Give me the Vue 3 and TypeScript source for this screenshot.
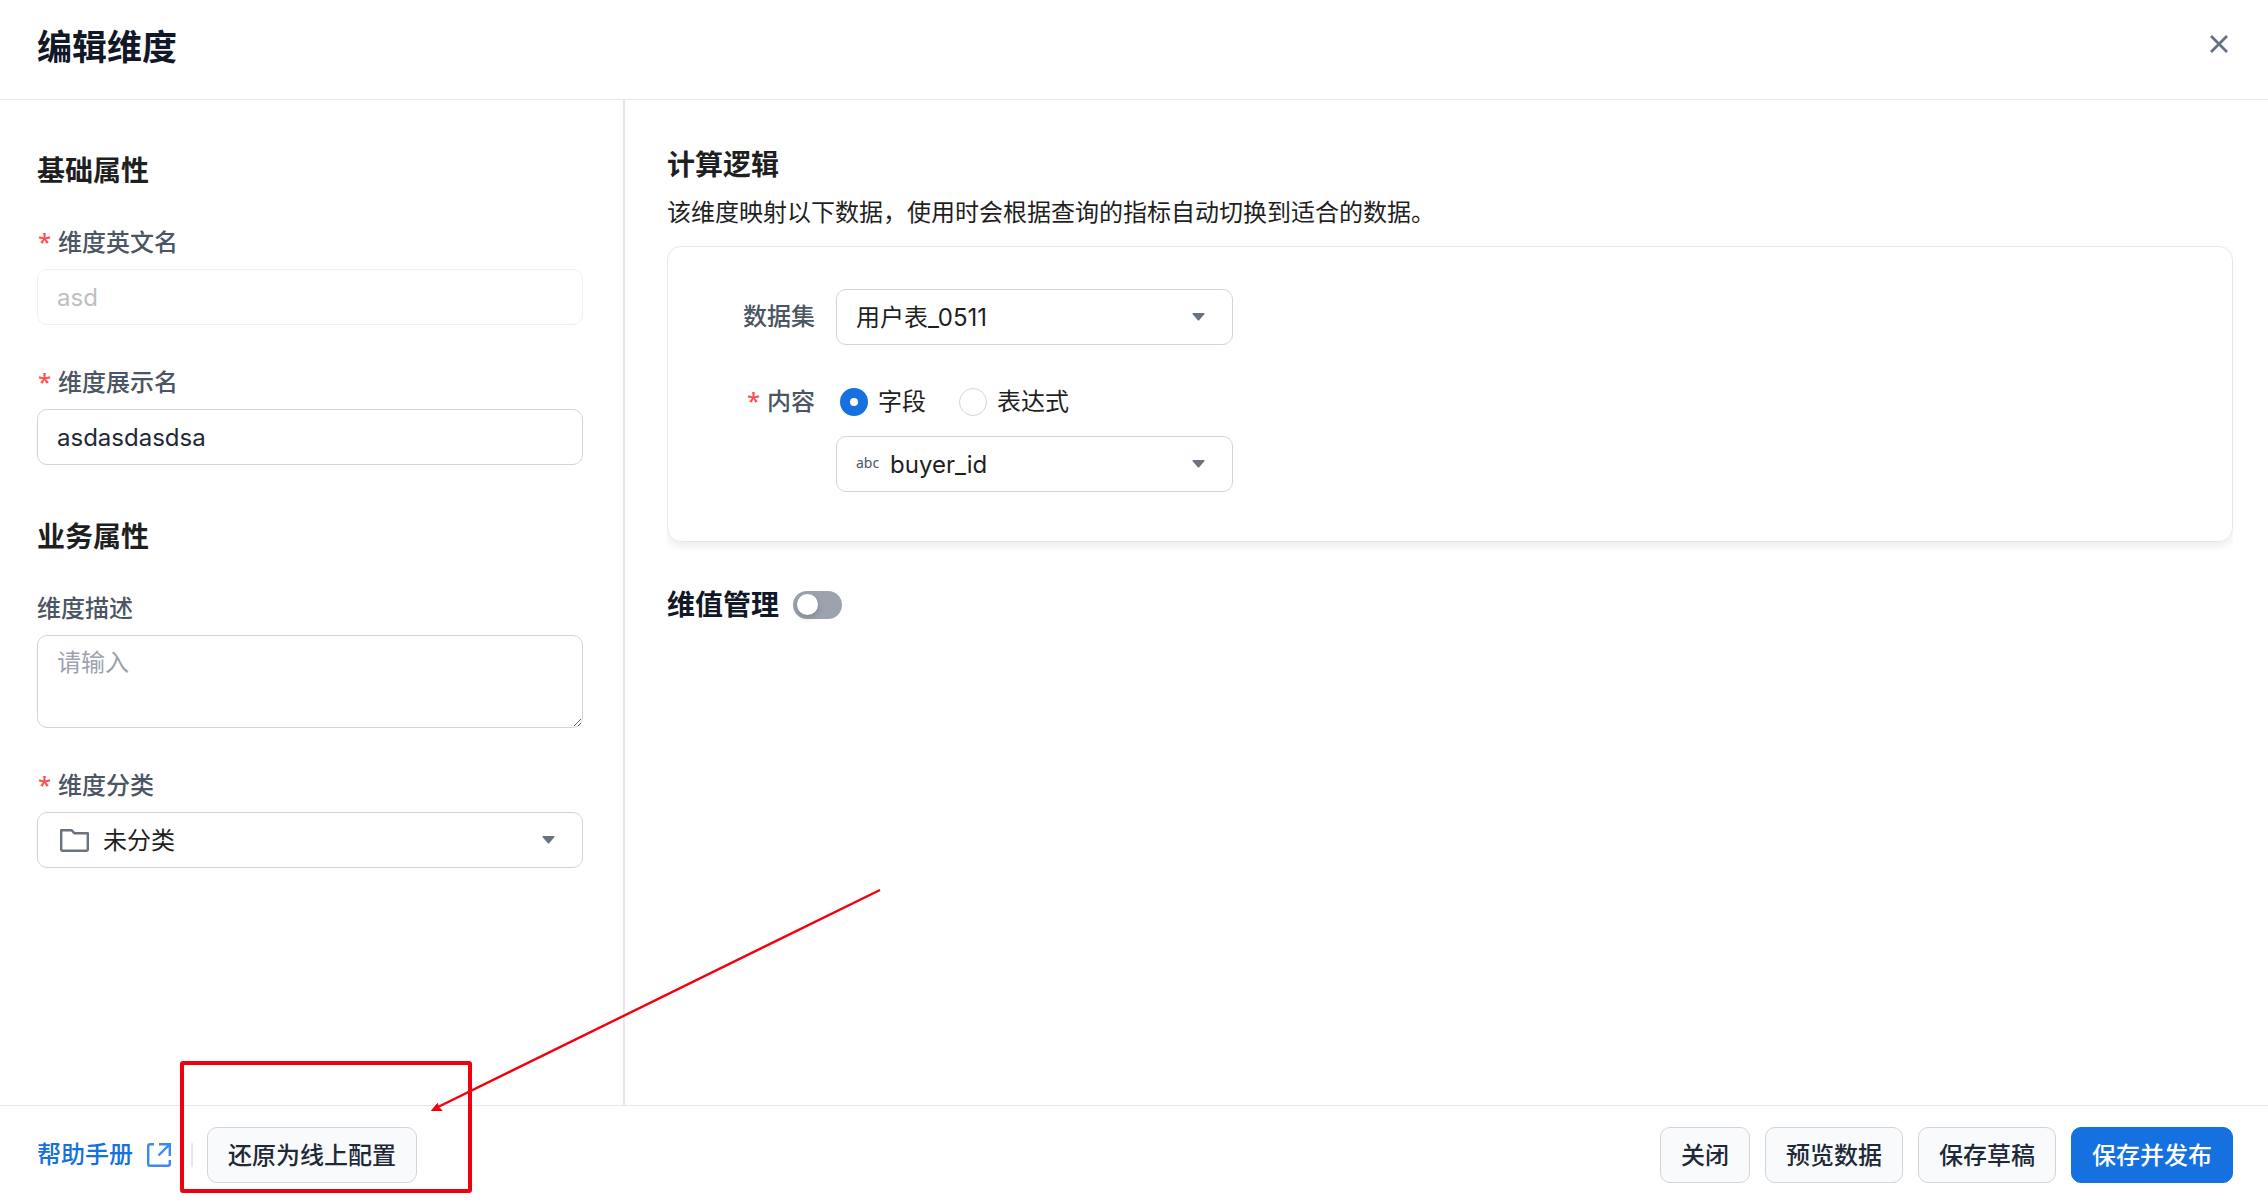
<script setup lang="ts">
import { ref } from 'vue'

const dimensionName = ref<string>('asd')
const displayName = ref<string>('asdasdasdsa')
const description = ref<string>('')
const category = ref<string>('未分类')
const dataset = ref<string>('用户表_0511')
const contentType = ref<'field' | 'expression'>('field')
const field = ref<string>('buyer_id')
const valueManaged = ref<boolean>(false)
</script>

<template>
  <div class="page">
    <header class="header">
      <h1 class="title">编辑维度</h1>
      <button class="close" type="button" aria-label="关闭">
        <svg width="18" height="18" viewBox="0 0 18 18" fill="none" stroke="currentColor" stroke-width="2.8">
          <path d="M1 1 17 17M17 1 1 17" />
        </svg>
      </button>
    </header>

    <div class="body">
      <aside class="side">
        <section class="group">
          <h2 class="heading">基础属性</h2>
          <div class="field">
            <label class="label" for="dim-name"><span class="star">*</span>维度英文名</label>
            <input id="dim-name" v-model="dimensionName" class="control" type="text" disabled />
          </div>
          <div class="field">
            <label class="label" for="dim-display"><span class="star">*</span>维度展示名</label>
            <input id="dim-display" v-model="displayName" class="control" type="text" />
          </div>
        </section>

        <section class="group">
          <h2 class="heading">业务属性</h2>
          <div class="field">
            <label class="label" for="dim-desc">维度描述</label>
            <textarea id="dim-desc" v-model="description" class="control area" placeholder="请输入"></textarea>
          </div>
          <div class="field">
            <label class="label" for="dim-category"><span class="star">*</span>维度分类</label>
            <div class="picker">
              <svg class="lead folder" width="29" height="23" viewBox="0 0 29 23" fill="none" stroke="currentColor" stroke-width="2.4" stroke-linejoin="round">
                <path d="M1.200 1.200H11.500L14.500 4.300H27.800V20.300Q27.800 21.800 26.300 21.800H2.700Q1.200 21.800 1.200 20.300Z" />
              </svg>
              <select id="dim-category" v-model="category" class="control with-folder">
                <option>未分类</option>
              </select>
              <svg class="caret" width="13" height="8" viewBox="0 0 13 8" fill="currentColor">
                <path d="M1 0H12Q13 .4 12.300 1.300L7.200 7.200Q6.500 7.900 5.800 7.200L.7 1.300Q0 .4 1 0Z" />
              </svg>
            </div>
          </div>
        </section>
      </aside>

      <main class="main">
        <h2 class="heading">计算逻辑</h2>
        <p class="hint">该维度映射以下数据，使用时会根据查询的指标自动切换到适合的数据。</p>

        <div class="card">
          <div class="row">
            <label class="label row-label tall" for="dataset">数据集</label>
            <div class="picker narrow">
              <select id="dataset" v-model="dataset" class="control">
                <option>用户表_0511</option>
              </select>
              <svg class="caret" width="13" height="8" viewBox="0 0 13 8" fill="currentColor">
                <path d="M1 0H12Q13 .4 12.300 1.300L7.200 7.200Q6.500 7.900 5.800 7.200L.7 1.300Q0 .4 1 0Z" />
              </svg>
            </div>
          </div>

          <div class="row">
            <label class="label row-label" for="content-field"><span class="star">*</span>内容</label>
            <div class="stack">
              <div class="radios" role="radiogroup" aria-label="内容">
                <label class="radio"><input v-model="contentType" type="radio" name="content" value="field" />字段</label>
                <label class="radio"><input v-model="contentType" type="radio" name="content" value="expression" />表达式</label>
              </div>
              <div class="picker narrow">
                <span class="lead type">abc</span>
                <select id="content-field" v-model="field" class="control with-type">
                  <option>buyer_id</option>
                </select>
                <svg class="caret" width="13" height="8" viewBox="0 0 13 8" fill="currentColor">
                  <path d="M1 0H12Q13 .4 12.300 1.300L7.200 7.200Q6.500 7.900 5.800 7.200L.7 1.300Q0 .4 1 0Z" />
                </svg>
              </div>
            </div>
          </div>
        </div>

        <div class="manage">
          <label class="heading dark" for="value-manage">维值管理</label>
          <input id="value-manage" v-model="valueManaged" class="switch" type="checkbox" role="switch" />
        </div>
      </main>
    </div>

    <footer class="footer">
      <a class="help" href="#help">
        帮助手册
        <svg width="24" height="24" viewBox="0 0 24 24" fill="none" stroke="#3b8af2" stroke-width="2.4">
          <path d="M7 1.200H3.200Q1.200 1.200 1.200 3.200V20.800Q1.200 22.800 3.200 22.800H20.800Q22.800 22.800 22.800 20.800V17M12 1.200H22.800V13M22.800 1.200 11.500 12.500" />
        </svg>
      </a>
      <span class="divider"></span>
      <button class="btn" type="button">还原为线上配置</button>
      <div class="actions">
        <button class="btn" type="button">关闭</button>
        <button class="btn" type="button">预览数据</button>
        <button class="btn" type="button">保存草稿</button>
        <button class="btn primary" type="button">保存并发布</button>
      </div>
    </footer>

    <svg class="annotation" width="704" height="306" viewBox="0 0 704 306" fill="none" stroke="#f3000f" aria-hidden="true">
      <rect x="2" y="176" width="288" height="128" rx="1" stroke-width="4" />
      <path d="M700 3 258 220" stroke-width="2.400" />
      <path d="M251.500 223.500 257.500 216.500 258.500 220 262 223.500Z" fill="#f3000f" stroke-width="1" />
    </svg>
  </div>
</template>

<style>
body {
  margin: 0;
  background: #fff;
}
</style>

<style scoped>
.page {
  position: relative;
  display: flex;
  flex-direction: column;
  box-sizing: border-box;
  min-height: 100vh;
  font-family: Inter, "Noto Sans CJK SC", sans-serif;
  font-size: 24px;
  line-height: 35px;
  color: #1f1f1f;
}

.page * {
  box-sizing: border-box;
}

.header {
  display: flex;
  justify-content: space-between;
  align-items: flex-start;
  height: 100px;
  padding: 22px 35px 0 37px;
  border-bottom: 1px solid #e5e7eb;
}

.title {
  margin: 0;
  font-size: 35px;
  line-height: 50px;
  font-weight: 600;
  color: #111827;
}

.close {
  display: grid;
  place-items: center;
  width: 28px;
  height: 43px;
  padding: 0;
  border: 0;
  background: none;
  color: #667085;
}

.body {
  display: flex;
  flex: 1;
}

.side {
  display: flex;
  flex-direction: column;
  gap: 51px;
  flex: 0 0 625px;
  padding: 50px 40px 50px 37px;
  border-right: 2px solid #e5e7eb;
}

.group {
  display: flex;
  flex-direction: column;
}

.heading {
  margin: 0;
  font-size: 28px;
  line-height: 42px;
  font-weight: 600;
}

.dark {
  color: #111827;
}

.group .heading {
  margin-bottom: 33px;
}

.field {
  display: flex;
  flex-direction: column;
  gap: 9px;
}

.field + .field {
  margin-top: 40px;
}

.label {
  font-weight: 500;
  color: #4b5563;
}

.star {
  display: inline-block;
  width: 21px;
  padding-left: 1px;
  font-family: "Noto Sans", sans-serif;
  font-weight: 500;
  line-height: 24px;
  color: #ff4d4f;
  text-align: left;
}

.control {
  display: block;
  width: 100%;
  height: 56px;
  margin: 0;
  padding: 0 19px;
  border: 1px solid #d1d5db;
  border-radius: 10px;
  background: #fff;
  font: inherit;
  color: #1f2937;
  appearance: none;
  outline: none;
}

.control:disabled {
  border-color: #f0f0f0;
  color: #bfbfbf;
}

.control::placeholder {
  color: #9ca3af;
  opacity: 1;
}

.area {
  height: 93px;
  padding: 9px 19px;
  resize: vertical;
}

select.control {
  padding-right: 56px;
  color: #1f1f1f;
}

select.with-folder {
  padding-left: 65px;
}

select.with-type {
  padding-left: 53px;
}

.picker {
  position: relative;
}

.narrow {
  width: 397px;
}

.lead {
  position: absolute;
  left: 23px;
  top: 0;
  bottom: 0;
  margin: auto 0;
  pointer-events: none;
}

.folder {
  color: #6b7280;
}

.type {
  left: 20px;
  font-family: "Noto Sans", sans-serif;
  font-size: 14px;
  line-height: 54px;
  color: #4b5563;
}

.caret {
  position: absolute;
  right: 28px;
  top: 24px;
  color: #6b7280;
  pointer-events: none;
}

.main {
  flex: 1;
  min-width: 0;
  padding: 44px 35px 44px 42px;
}

.hint {
  margin: 9px 0 16px;
}

.card {
  display: flex;
  flex-direction: column;
  gap: 39px;
  padding: 42px 42px 49px;
  border: 1px solid #e5e7eb;
  border-radius: 14px;
  box-shadow: 0 4px 8px rgba(0, 0, 0, 0.08);
  clip-path: inset(0 0 -20px 0);
}

.row {
  display: flex;
  gap: 21px;
}

.row-label {
  flex: 0 0 105px;
  text-align: right;
}

.tall {
  line-height: 56px;
}

.stack {
  display: flex;
  flex-direction: column;
  gap: 17px;
}

.radios {
  display: flex;
  gap: 33px;
  padding-left: 4px;
}

.radio {
  display: flex;
  align-items: center;
  gap: 10px;
}

.radio input {
  width: 28px;
  height: 28px;
  margin: 0;
  border: 1px solid #d1d5db;
  border-radius: 50%;
  background: #fff;
  appearance: none;
}

.radio input:checked {
  border: 10px solid #1570e0;
}

.manage {
  display: flex;
  align-items: center;
  gap: 14px;
  margin-top: 42px;
}

.switch {
  width: 49px;
  height: 28px;
  margin: 0;
  padding: 3px 4px;
  border-radius: 14px;
  background: #9ca3af;
  appearance: none;
}

.switch::before {
  content: "";
  display: block;
  width: 21px;
  height: 21px;
  border-radius: 50%;
  background: #fff;
  box-shadow: 0 3px 6px rgba(0, 35, 11, 0.2);
}

.switch:checked {
  padding-left: 24px;
  background: #1570e0;
}

.footer {
  display: flex;
  align-items: center;
  height: 96px;
  padding: 20px 35px 18px 37px;
  border-top: 1px solid #e5e7eb;
}

.help {
  display: flex;
  align-items: center;
  gap: 14px;
  font-weight: 500;
  color: #1570e0;
  text-decoration: none;
}

.divider {
  width: 2px;
  height: 24px;
  margin: 0 14px 0 20px;
  background: #e5e7eb;
}

.btn {
  height: 56px;
  padding: 2px 20px 0;
  border: 1px solid #d1d5db;
  border-radius: 10px;
  background: #f9fafb;
  font: inherit;
  font-weight: 500;
  color: #1f2937;
  white-space: nowrap;
}

.primary {
  border-color: #1570e0;
  background: #1570e0;
  color: #fff;
}

.actions {
  display: flex;
  gap: 15px;
  margin-left: auto;
}

.annotation {
  position: absolute;
  left: 180px;
  bottom: 8px;
  pointer-events: none;
}
</style>
